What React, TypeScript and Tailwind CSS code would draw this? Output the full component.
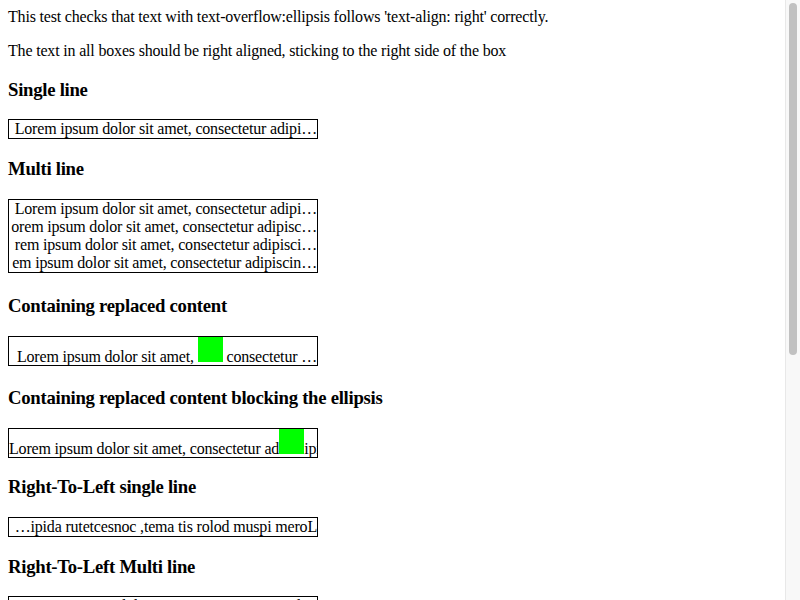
const LOREM = "Lorem ipsum dolor sit amet, consectetur adipiscing elit";

function Box({ children, rtl = false, clip = false }: { children: React.ReactNode; rtl?: boolean; clip?: boolean }) {
  return (
    <div
      dir={rtl ? "rtl" : undefined}
      className={`w-[310px] overflow-hidden whitespace-nowrap border border-black text-right ${
        clip ? "text-clip" : ""
      } ${rtl ? "[unicode-bidi:bidi-override]" : ""}`}
    >
      {children}
    </div>
  );
}

function Line({ text }: { text: string }) {
  return <div className="overflow-hidden whitespace-nowrap">{text}</div>;
}

function Green() {
  return <span className="inline-block h-[25px] w-[25px] bg-[#00ff00] align-baseline" />;
}

function Heading({ children, top = "mt-[18.72px]" }: { children: React.ReactNode; top?: string }) {
  return (
    <h3 className={`${top} mb-[18.72px] text-[18.72px] font-bold leading-[22px] tracking-[-0.27px]`}>{children}</h3>
  );
}

// lines as the browser cut them, ellipsis kept flush right
const multi = [
  "Lorem ipsum dolor sit amet, consectetur adipi…",
  "orem ipsum dolor sit amet, consectetur adipisc…",
  "rem ipsum dolor sit amet, consectetur adipisci…",
  "em ipsum dolor sit amet, consectetur adipiscin…",
];

export default function App() {
  return (
    <div className="flex h-screen overflow-hidden bg-white">
      <div className="min-w-0 flex-1 overflow-hidden">
        <div className="m-2 font-['Liberation_Serif',serif] text-[16px] leading-[18px] tracking-[-0.18px] text-black">
          <div className="mb-4">
            This test checks that text with text-overflow:ellipsis follows 'text-align: right' correctly.
          </div>
          <p className="my-4">The text in all boxes should be right aligned, sticking to the right side of the box</p>

          <Heading>Single line</Heading>
          <Box>{multi[0]}</Box>

          <Heading>Multi line</Heading>
          <div className="w-[310px] border border-black text-right">
            {multi.map((t) => (
              <Line key={t} text={t} />
            ))}
          </div>

          <Heading top="mt-[22px]">Containing replaced content</Heading>
          <Box>
            <div className="h-[28px]">
              Lorem ipsum dolor sit amet, <Green /> consectetur …
            </div>
          </Box>

          <Heading top="mt-[21.2px]">Containing replaced content blocking the ellipsis</Heading>
          <Box clip>
            <div className="h-[28px]">
              Lorem ipsum dolor sit amet, consectetur ad
              <Green />
              ipiscing elit
            </div>
          </Box>

          <Heading>Right-To-Left single line</Heading>
          <Box rtl>{multi[0]}</Box>

          <Heading>Right-To-Left Multi line</Heading>
          <div dir="rtl" className="w-[310px] border border-black text-right [unicode-bidi:bidi-override]">
            {multi.map((t) => (
              <Line key={t} text={t} />
            ))}
          </div>

          <Heading>Right-To-Left containing replaced content</Heading>
          <Box rtl>
            Lorem ipsum dolor sit amet, <Green /> consectetur …
          </Box>

          <Heading>Right-To-Left containing replaced content blocking the ellipsis</Heading>
          <Box rtl clip>
            Lorem ipsum dolor sit amet, consectetur ad
            <Green />
            ipiscing elit
          </Box>
        </div>
      </div>

      {/* scrollbar */}
      <div className="flex w-[15px] shrink-0 flex-col border-l border-[#e8e8e8] bg-[#f8f8f8] px-[3px] pt-[3px]">
        <div className="h-[352px] w-[8px] rounded-full bg-[#c1c1c1]" />
      </div>
    </div>
  );
}
